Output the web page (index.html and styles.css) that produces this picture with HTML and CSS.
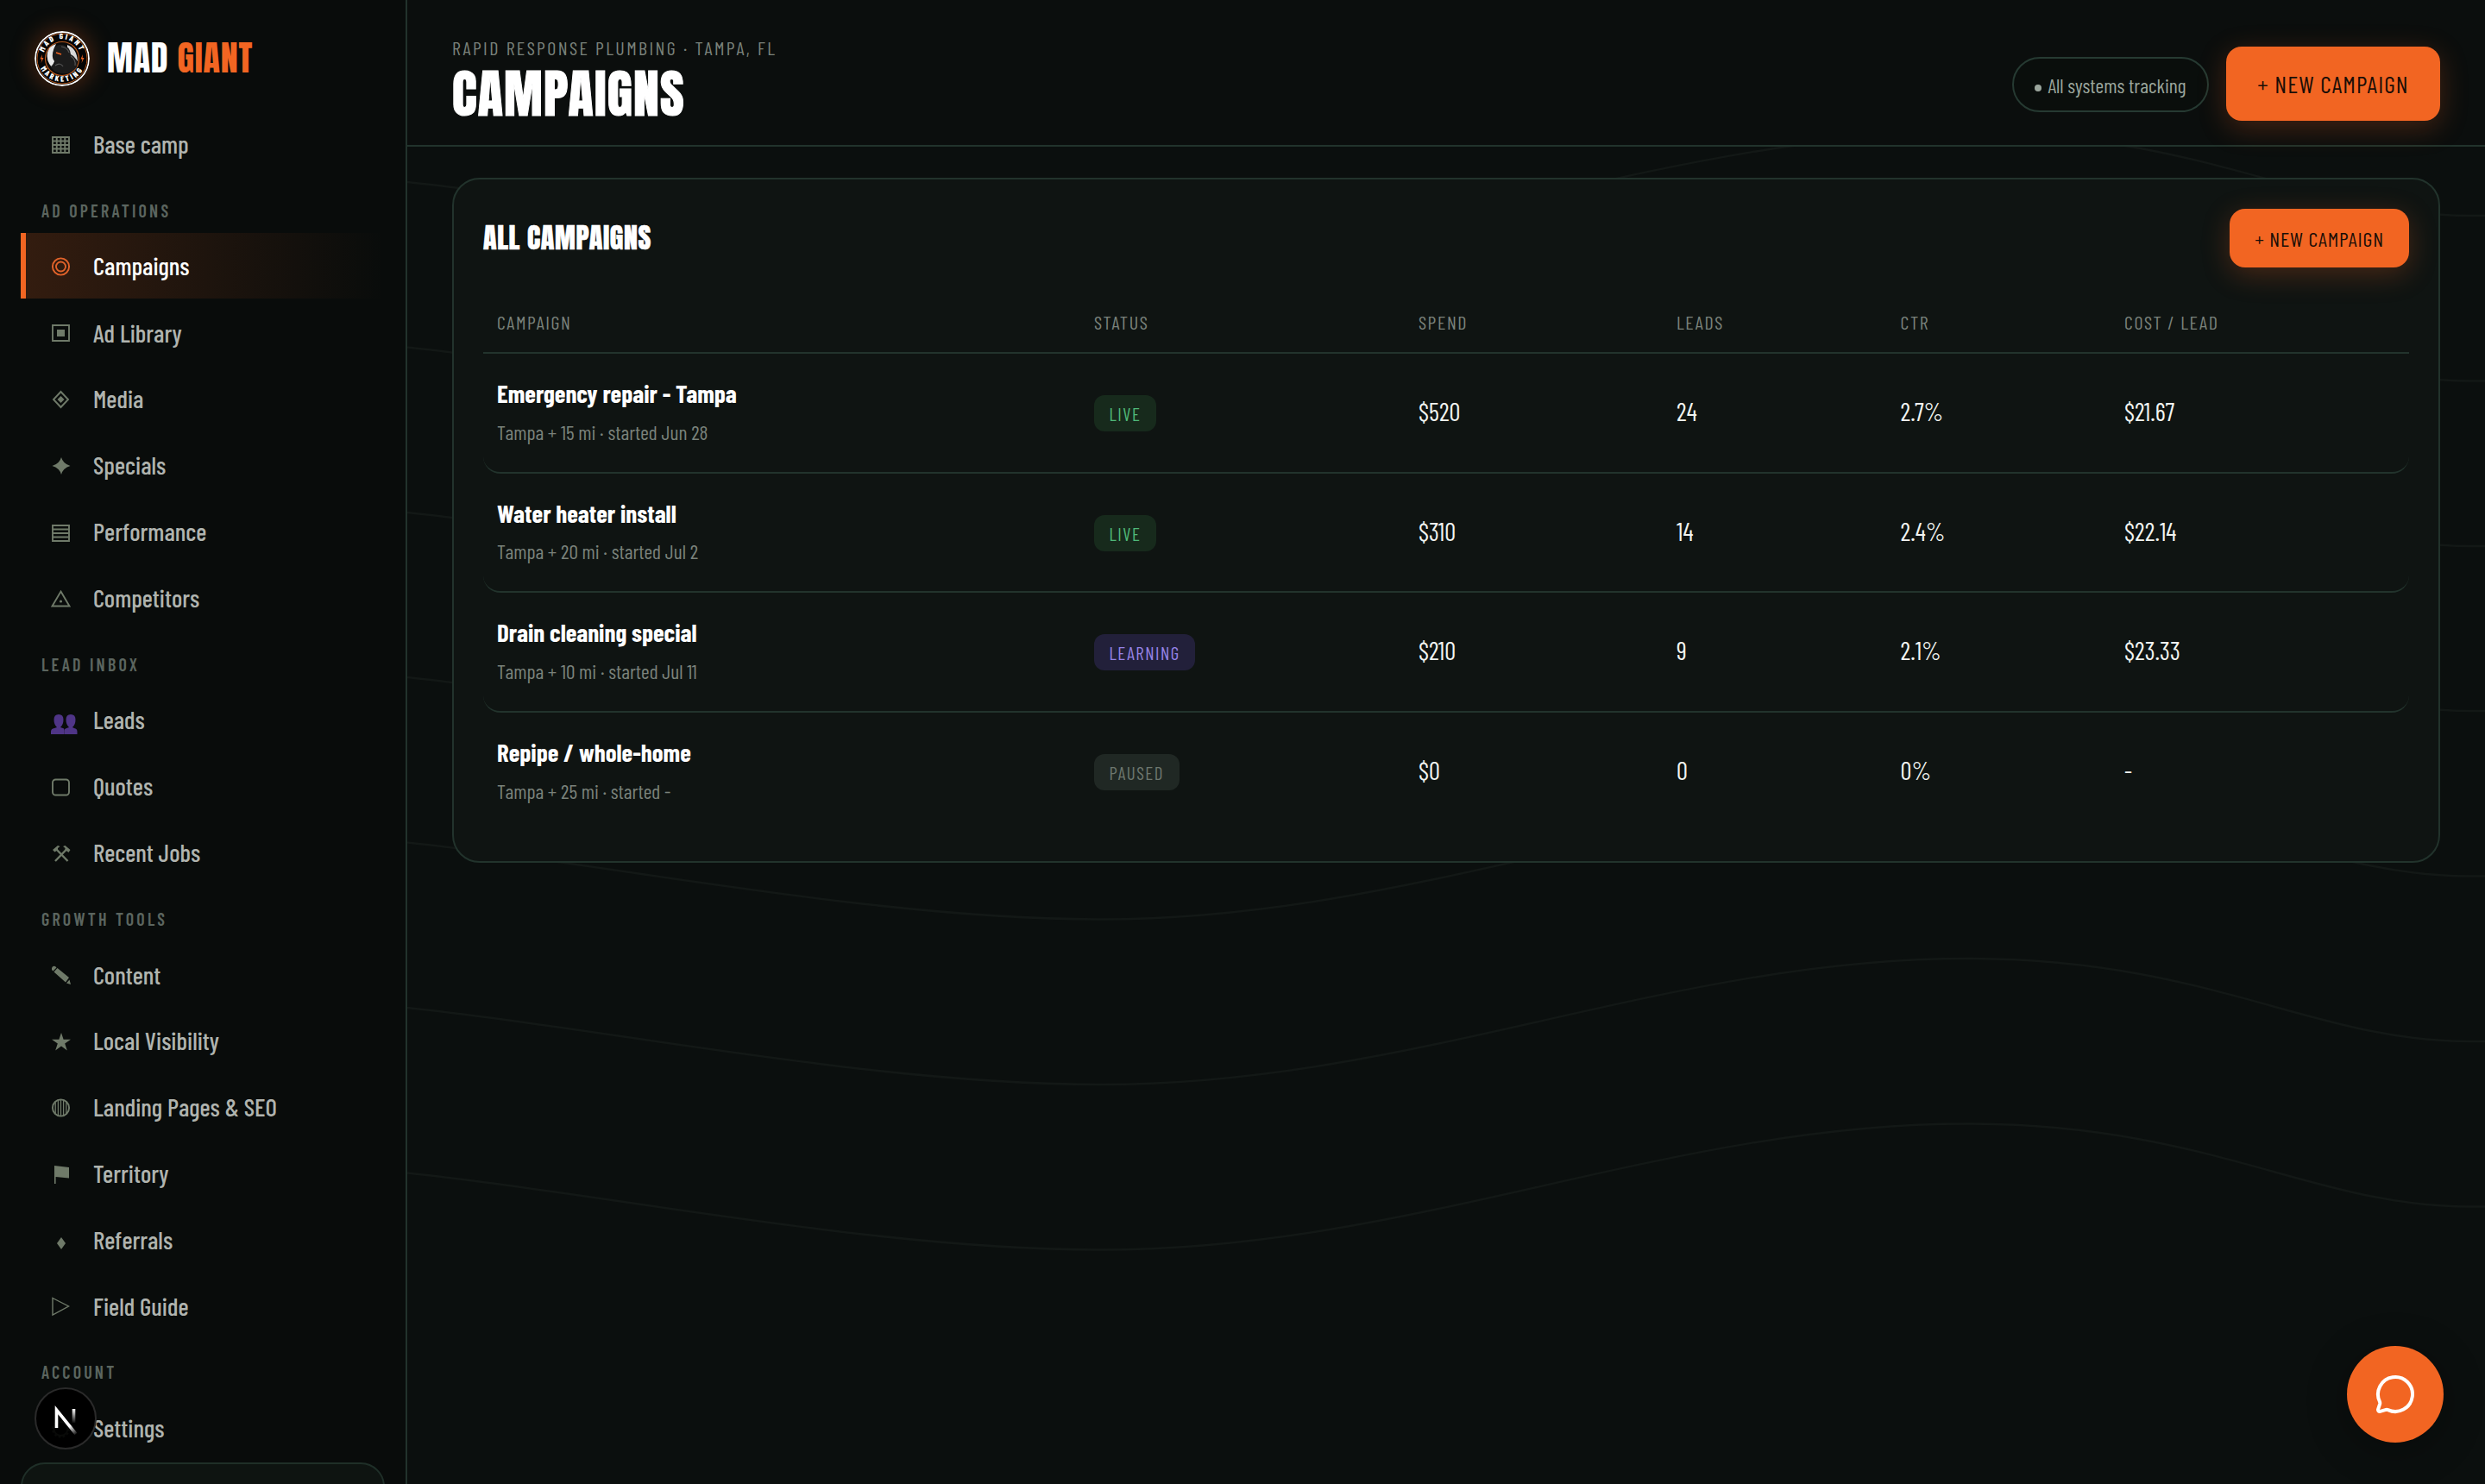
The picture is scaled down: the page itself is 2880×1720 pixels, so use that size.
FILE: index.html
```html
<!DOCTYPE html>
<html lang="en">
<head>
    <meta charset="UTF-8">
    <meta name="viewport" content="width=device-width, initial-scale=1.0">
    <title>Campaigns - Mad Giant</title>
    <link rel="stylesheet" href="styles.css">
</head>
<body>

    <!-- contour lines -->
    <svg class="topo" viewBox="0 0 2880 1720">
        <defs>
            <path id="contour" d="M0 -40 C160 -40 300 -22 472 0 C690 22 1010 89 1275 89 C1640 89 1930 -57 2280 -57 C2560 -57 2680 39 2862 39 L2880 39"/>
        </defs>
        <use href="#contour" y="211"/>
        <use href="#contour" y="402.500"/>
        <use href="#contour" y="594"/>
        <use href="#contour" y="785"/>
        <use href="#contour" y="976.500"/>
        <use href="#contour" y="1168"/>
        <use href="#contour" y="1359.500"/>
    </svg>

    <div class="app">
        <aside class="sidebar">
            <div class="brand">
                <svg class="brand-logo" viewBox="0 0 64 64">
                    <defs>
                        <path id="arcTop" d="M10.500 36 A22 22 0 1 1 53.500 36"/>
                        <path id="arcBottom" d="M4.500 36 A28 28 0 0 0 59.500 36"/>
                    </defs>
                    <circle cx="32" cy="32" r="31" fill="#050505" stroke="#fff" stroke-width="1.800"/>
                    <circle cx="32" cy="32" r="29" fill="none" stroke="#b4571c" stroke-width="1"/>
                    <circle cx="32" cy="32" r="19.500" fill="#0a0a0a" stroke="#b4571c" stroke-width="1.200"/>
                    <path d="M15 25 Q17 17 25 15 Q19 25 24 33 L20 42 Q13 34 15 25Z" fill="#e8e8e8"/>
                    <path d="M38 16 Q49 20 50 35 Q44 28 38 26Z" fill="#d8d8d8"/>
                    <path d="M21 26 Q23 14 33 16 Q41 18 42 27 Q51 31 49 42 Q41 51 30 49 Q20 46 19 41 L24 36 Q20 32 21 26Z" fill="#1c1c1c"/>
                    <path d="M31 18 Q38 19 40 25 M42 29 Q48 33 47 40 M24 40 Q30 36 33 41" fill="none" stroke="#555" stroke-width="1.200"/>
                    <path d="M25 25 L31 27" stroke="#f26522" stroke-width="1.600"/>
                    <path d="M9 27 L6.500 32.500 H8.500 L7.500 37 L10.500 31 H8.500Z M56 27 L53.500 32.500 H55.500 L54.500 37 L57.500 31 H55.500Z" fill="#f26522"/>
                    <text class="logo-ring top"><textPath href="#arcTop" startOffset="50%">MAD GIANT</textPath></text>
                    <text class="logo-ring"><textPath href="#arcBottom" startOffset="50%">MARKETING</textPath></text>
                </svg>
                <div class="brand-name">MAD <span>GIANT</span></div>
            </div>

            <nav class="nav">
                <a class="nav-item">
                    <svg class="ico" viewBox="0 0 24 24"><path d="M1 4H20V22H1Z M5.750 4V22 M10.500 4V22 M15.250 4V22 M1 8.500H20 M1 13H20 M1 17.500H20"/></svg>
                    Base camp
                </a>

                <div class="nav-heading">AD OPERATIONS</div>
                <a class="nav-item active">
                    <svg class="ico" viewBox="0 0 24 24"><circle cx="10.500" cy="13" r="9.600"/><circle cx="10.500" cy="13" r="5.500"/></svg>
                    Campaigns
                </a>
                <a class="nav-item">
                    <svg class="ico" viewBox="0 0 24 24"><path d="M1 4H20V22H1Z"/><path class="fill" d="M6 9H15V17H6Z"/></svg>
                    Ad Library
                </a>
                <a class="nav-item">
                    <svg class="ico" viewBox="0 0 24 24"><path d="M10.500 4 L19 13 L10.500 22 L2 13Z"/><path class="fill" d="M10.500 9 L14.500 13 L10.500 17 L6.500 13Z"/></svg>
                    Media
                </a>
                <a class="nav-item">
                    <svg class="ico" viewBox="0 0 24 24"><path class="fill" d="M11 3 Q13 10.500 21.500 13 Q13 15.500 11 23 Q9 15.500 0.500 13 Q9 10.500 11 3Z"/></svg>
                    Specials
                </a>
                <a class="nav-item">
                    <svg class="ico" viewBox="0 0 24 24"><path d="M1 5H20V23H1Z M1 9.500H20 M1 14H20 M1 18.500H20"/></svg>
                    Performance
                </a>
                <a class="nav-item">
                    <svg class="ico" viewBox="0 0 24 24"><path d="M10.500 5.500 L20.500 22.500 H0.500Z"/><circle class="fill" cx="10.500" cy="17" r="1.600"/></svg>
                    Competitors
                </a>

                <div class="nav-heading">LEAD INBOX</div>
                <a class="nav-item">
                    <svg class="ico people" viewBox="0 0 24 24">
                        <path d="M-1 29 V26 Q-1 22.500 3 22 L6 21 Q2.500 18 2.500 12 Q2.500 6 8 6 Q13.500 6 13.500 12 Q13.500 18 10 21 L13 22 Q14.500 22 14.500 24 V29Z"/>
                        <path d="M14.500 29 V25 Q14.500 22.500 17 22 L20 21 Q16.500 18 16.500 12 Q16.500 6 22 6 Q27.500 6 27.500 12 Q27.500 18 24 21 L26 22 Q29.500 22.500 29.500 26 V29Z"/>
                    </svg>
                    Leads
                </a>
                <a class="nav-item">
                    <svg class="ico" viewBox="0 0 24 24"><rect x="1" y="4.500" width="19" height="18" rx="3.500"/></svg>
                    Quotes
                </a>
                <a class="nav-item">
                    <svg class="ico" viewBox="0 0 24 24">
                        <path d="M5 8 L18.500 22" stroke-width="2.400"/><path d="M17.500 8 L4 22" stroke-width="2.400"/>
                        <path class="fill" d="M1 9 L7 4 L9.500 5 L7 7 L7 9 L3.500 11.500Z M21.500 9 L15.500 4 L13 5 L15.500 7 L15.500 9 L19.500 12Z"/>
                    </svg>
                    Recent Jobs
                </a>

                <div class="nav-heading">GROWTH TOOLS</div>
                <a class="nav-item">
                    <svg class="ico" viewBox="0 0 24 24"><path class="fill" d="M0 5 Q1 2 4 3 L5.500 4.500 L1.500 8.500 L0 7Z M6.500 5 L20 16 L16 21.500 L2.500 9.500Z M20.500 18.500 L22 24 L17 22.500Z"/></svg>
                    Content
                </a>
                <a class="nav-item">
                    <svg class="ico" viewBox="0 0 24 24"><path class="fill" d="M11 3 L13.600 10.700 H22 L15.200 15.500 L17.800 23.500 L11 18.600 L4.200 23.500 L6.800 15.500 L0 10.700 H8.400Z"/></svg>
                    Local Visibility
                </a>
                <a class="nav-item">
                    <svg class="ico" viewBox="0 0 24 24"><circle cx="10.500" cy="13" r="9.600"/><path d="M4.200 6.500V19.500 M7.400 4V22 M10.500 3.500V22.500 M13.600 4V22 M16.800 6.500V19.500" stroke-width="1.300"/></svg>
                    Landing Pages &amp; SEO
                </a>
                <a class="nav-item">
                    <svg class="ico" viewBox="0 0 24 24"><path class="fill" d="M3 3 L20 5 V17.500 L4.600 16 V24 H3Z"/></svg>
                    Territory
                </a>
                <a class="nav-item">
                    <svg class="ico" viewBox="0 0 24 24"><path class="fill" d="M11 10 L16 17 L11 24 L6 17Z"/></svg>
                    Referrals
                </a>
                <a class="nav-item">
                    <svg class="ico" viewBox="0 0 24 24"><path d="M1 3.500 L19.500 13 L1 23Z" stroke-width="1.400"/></svg>
                    Field Guide
                </a>

                <div class="nav-heading">ACCOUNT</div>
                <a class="nav-item">
                    <svg class="ico" viewBox="0 0 24 24"><circle cx="10.500" cy="13" r="8"/><circle cx="10.500" cy="13" r="9.500" stroke-dasharray="2.500 2.500"/></svg>
                    Settings
                </a>
            </nav>

            <div class="sidebar-card"></div>
        </aside>

        <main class="main">
            <header class="topbar">
                <div class="page-title">
                    <div class="eyebrow">RAPID RESPONSE PLUMBING · TAMPA, FL</div>
                    <h1>CAMPAIGNS</h1>
                </div>
                <div class="topbar-actions">
                    <div class="status-pill"><i class="dot"></i>All systems tracking</div>
                    <button class="btn btn-lg">+ NEW CAMPAIGN</button>
                </div>
            </header>

            <section class="card">
                <div class="card-head">
                    <h2>ALL CAMPAIGNS</h2>
                    <button class="btn">+ NEW CAMPAIGN</button>
                </div>

                <div class="row row-head">
                    <div>CAMPAIGN</div>
                    <div>STATUS</div>
                    <div>SPEND</div>
                    <div>LEADS</div>
                    <div>CTR</div>
                    <div>COST / LEAD</div>
                </div>
                <div class="row">
                    <div>
                        <div class="name">Emergency repair - Tampa</div>
                        <div class="meta">Tampa + 15 mi · started Jun 28</div>
                    </div>
                    <div><span class="badge live">LIVE</span></div>
                    <div>$520</div>
                    <div>24</div>
                    <div>2.7%</div>
                    <div>$21.67</div>
                </div>
                <div class="row">
                    <div>
                        <div class="name">Water heater install</div>
                        <div class="meta">Tampa + 20 mi · started Jul 2</div>
                    </div>
                    <div><span class="badge live">LIVE</span></div>
                    <div>$310</div>
                    <div>14</div>
                    <div>2.4%</div>
                    <div>$22.14</div>
                </div>
                <div class="row">
                    <div>
                        <div class="name">Drain cleaning special</div>
                        <div class="meta">Tampa + 10 mi · started Jul 11</div>
                    </div>
                    <div><span class="badge learning">LEARNING</span></div>
                    <div>$210</div>
                    <div>9</div>
                    <div>2.1%</div>
                    <div>$23.33</div>
                </div>
                <div class="row">
                    <div>
                        <div class="name">Repipe / whole-home</div>
                        <div class="meta">Tampa + 25 mi · started -</div>
                    </div>
                    <div><span class="badge paused">PAUSED</span></div>
                    <div>$0</div>
                    <div>0</div>
                    <div>0%</div>
                    <div>-</div>
                </div>
            </section>
        </main>
    </div>

    <!-- floating buttons -->
    <div class="dev-badge">
        <svg viewBox="0 0 72 72">
            <defs>
                <linearGradient id="nDiag" x1="42" y1="44" x2="50" y2="54" gradientUnits="userSpaceOnUse"><stop stop-color="#fff"/><stop offset="1" stop-color="#fff" stop-opacity="0"/></linearGradient>
                <linearGradient id="nBar" x1="0" y1="25" x2="0" y2="42" gradientUnits="userSpaceOnUse"><stop stop-color="#fff"/><stop offset="1" stop-color="#fff" stop-opacity="0"/></linearGradient>
            </defs>
            <path d="M25.500 47 V26 L48 54" fill="none" stroke="url(#nDiag)" stroke-width="3.600"/>
            <rect x="43.700" y="25" width="3.600" height="16" fill="url(#nBar)"/>
        </svg>
    </div>
    <button class="chat-fab">
        <svg viewBox="0 0 24 24"><path d="M2.992 16.342a2 2 0 0 1 .094 1.167l-1.065 3.290a1 1 0 0 0 1.236 1.168l3.413-.998a2 2 0 0 1 1.099.092 10 10 0 1 0-4.777-4.719"/></svg>
    </button>

</body>
</html>
```
FILE: styles.css
```css
* {
    box-sizing: border-box;
}
body {
    margin: 0;
    height: 1720px;
    background: #0b0f0e;
    color: #f2f4f1;
    font-family: "Barlow Condensed", "Roboto", sans-serif;
    overflow: hidden;
}
.topo {
    position: absolute;
    top: 0;
    left: 0;
    width: 2880px;
    height: 1720px;
    fill: none;
    stroke: #131816;
    stroke-width: 2.5;
}
.app {
    position: relative;
    display: flex;
    height: 1720px;
}

/* sidebar */
.sidebar {
    width: 472px;
    flex: none;
    padding: 36px 24px 0;
    background: #090c0b;
    border-right: 2px solid #22332c;
    overflow: hidden;
}
.brand {
    display: flex;
    align-items: center;
    gap: 20px;
    height: 64px;
    margin-bottom: 28.4px;
    padding-left: 16px;
}
.brand-logo {
    width: 64px;
    height: 64px;
    border-radius: 50%;
    box-shadow: 0 0 28px rgba(242, 101, 34, 0.35);
}
.logo-ring {
    font-family: "Barlow Condensed", "Roboto", sans-serif;
    font-size: 9px;
    font-weight: 800;
    letter-spacing: 2.6px;
    fill: #fff;
    text-anchor: middle;
}
.logo-ring.top {
    letter-spacing: 2.2px;
}
.brand-name {
    font-family: "Anton", "Roboto", sans-serif;
    font-size: 40px;
    line-height: 62px;
    letter-spacing: 0.8px;
    color: #fff;
    margin-bottom: 2px;
}
.brand-name span {
    color: #f26522;
}
.nav-item {
    display: flex;
    align-items: center;
    gap: 24px;
    height: 76.8px;
    padding-left: 30px;
    border-left: 6px solid transparent;
    font-size: 29px;
    font-weight: 500;
    color: #b0b4af;
}
.nav-item.active {
    height: 76px;
    margin-bottom: 0.8px;
    border-left-color: #f26522;
    background: linear-gradient(90deg, rgba(242, 101, 34, 0.18), transparent);
    color: #fff;
}
.nav-heading {
    height: 64.8px;
    padding: 26.8px 24px 0;
    font-size: 20px;
    line-height: 24px;
    font-weight: 600;
    letter-spacing: 3.2px;
    color: #5b655f;
}
.ico {
    width: 24px;
    height: 24px;
    flex: none;
    overflow: visible;
    fill: none;
    stroke: #6f7a69;
    stroke-width: 1.9;
}
.ico .fill {
    fill: #6f7a69;
    stroke: none;
}
.active .ico {
    stroke: #e0622a;
}
.ico.people {
    fill: #4f3587;
    stroke: none;
}
.sidebar-card {
    height: 200px;
    margin-top: 1.6px;
    border: 2px solid #1f2f28;
    border-radius: 28px;
    background: #0e1411;
}

/* top bar */
.main {
    flex: 1;
}
.topbar {
    display: flex;
    align-items: center;
    justify-content: space-between;
    height: 170px;
    padding: 26px 52px 0;
    background: #0b0e0d;
    border-bottom: 2px solid #22332c;
}
.page-title {
    margin-bottom: 13px;
}
.eyebrow {
    font-size: 22px;
    line-height: 26px;
    letter-spacing: 2.42px;
    color: #7a827b;
}
h1, h2 {
    margin: 0;
    font-family: "Anton", "Roboto", sans-serif;
    font-weight: 400;
    color: #fff;
    -webkit-text-stroke: 1px #fff;
}
h1 {
    margin-top: 10.6px;
    font-size: 60px;
    line-height: 60px;
    letter-spacing: 1.2px;
}
h2 {
    font-size: 32px;
    line-height: 40px;
    letter-spacing: 0.64px;
    -webkit-text-stroke-width: 0.6px;
}
.topbar-actions {
    display: flex;
    align-items: center;
    gap: 20px;
}
.status-pill {
    display: flex;
    align-items: center;
    justify-content: center;
    gap: 7px;
    width: 228px;
    height: 64px;
    margin-top: 2px;
    border: 2px solid #263a32;
    border-radius: 32px;
    background: #0a0e0c;
    font-size: 23.6px;
    color: #9ba69d;
}
.dot {
    width: 8px;
    height: 8px;
    margin-top: 8px;
    border-radius: 50%;
    background: #9ba69d;
}
.btn {
    width: 208px;
    height: 68px;
    padding: 0;
    border: none;
    border-radius: 18px;
    background: #f26522;
    box-shadow: 0 8px 32px rgba(242, 101, 34, 0.25);
    color: #1a0e07;
    font-family: inherit;
    font-size: 24px;
    letter-spacing: 0.84px;
    cursor: pointer;
}
.btn-lg {
    width: 248px;
    height: 86px;
    font-size: 28px;
    letter-spacing: 1.04px;
}

/* campaigns table */
.card {
    margin: 36px 52px 0;
    height: 794px;
    padding: 34px;
    border: 2px solid #22332c;
    border-radius: 32px;
    background: #0f1412;
}
.card-head {
    display: flex;
    align-items: center;
    justify-content: space-between;
    height: 68px;
    margin-bottom: 49.6px;
}
.row {
    display: grid;
    grid-template-columns: 692px 376px 299px 259.5px 259.5px 1fr;
    align-items: center;
    height: 138.7px;
    padding: 0 16px 4px;
    border-bottom: 2px solid #22332c;
    border-radius: 20px;
    font-size: 29px;
}
.row:last-child {
    border-bottom: none;
    padding-bottom: 6px;
}
.row-head {
    height: 50.4px;
    padding-bottom: 22px;
    border-radius: 0;
    font-size: 22px;
    line-height: 26px;
    letter-spacing: 1.58px;
    color: #7a827b;
}
.name {
    font-size: 29px;
    line-height: 36px;
    font-weight: 700;
    color: #fff;
}
.meta {
    margin-top: 11.6px;
    font-size: 23.5px;
    line-height: 29px;
    color: #7a827b;
}
.badge {
    display: inline-block;
    height: 42px;
    margin-top: 5px;
    padding: 0 17.4px;
    border-radius: 12px;
    font-size: 21px;
    line-height: 43px;
    letter-spacing: 1.5px;
    vertical-align: top;
}
.live {
    background: #172a1c;
    color: #4fb878;
}
.learning {
    background: #22203a;
    color: #9583e6;
}
.paused {
    background: #202824;
    color: #6d776f;
}

.dev-badge {
    position: absolute;
    left: 40px;
    top: 1608px;
    width: 72px;
    height: 72px;
    border: 2px solid #2a2a2a;
    border-radius: 50%;
    background: rgba(0, 0, 0, 0.92);
}
.dev-badge svg {
    display: block;
    margin: -2px;
    width: 72px;
    height: 72px;
}
.chat-fab {
    position: absolute;
    left: 2720px;
    top: 1560px;
    display: flex;
    align-items: center;
    justify-content: center;
    width: 112px;
    height: 112px;
    padding: 0;
    border: none;
    border-radius: 50%;
    background: #f26522;
    box-shadow: 0 8px 48px rgba(0, 0, 0, 0.3);
}
.chat-fab svg {
    width: 48px;
    height: 48px;
    fill: none;
    stroke: #fff;
    stroke-width: 2;
    stroke-linecap: round;
    stroke-linejoin: round;
}
```
